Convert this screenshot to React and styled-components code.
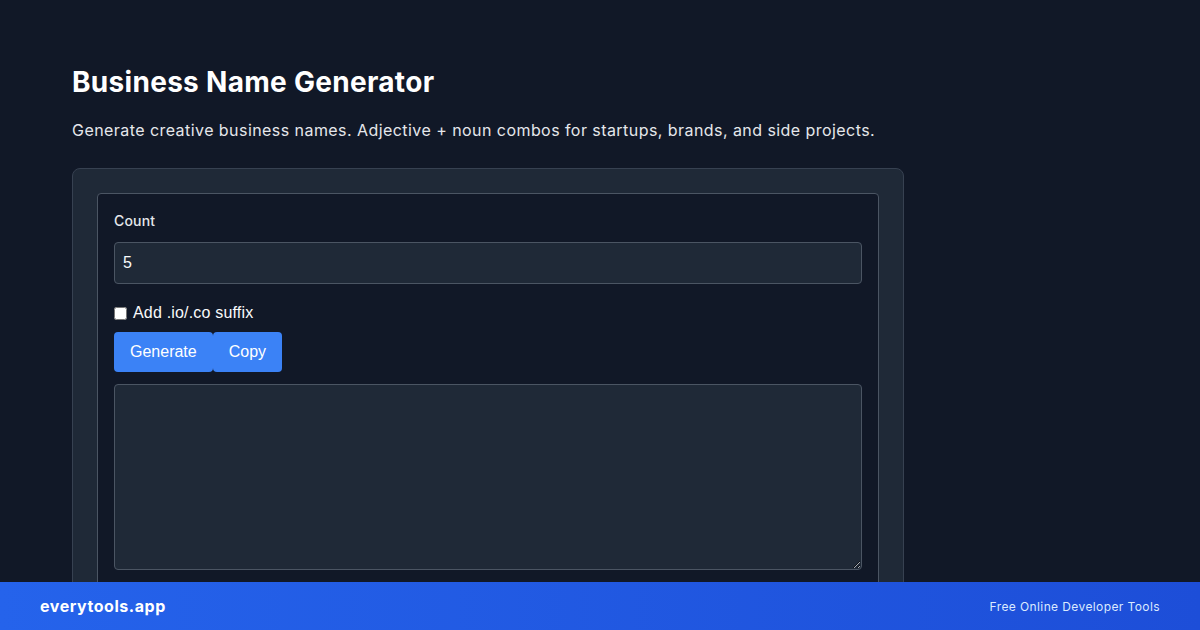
import styled, { createGlobalStyle } from "styled-components";

const GlobalStyle = createGlobalStyle`
  html, body {
    margin: 0;
    padding: 0;
    background: #111827;
    color: #f3f4f6;
    font-family: Inter, "Noto Sans", "Liberation Sans", sans-serif;
  }
  * { box-sizing: border-box; }
`;

const Page = styled.main`
  min-height: 630px;
  padding: 64px 72px 0;
  width: 976px;
`;

const Title = styled.h1`
  font-size: 28px;
  font-weight: 700;
  line-height: 36px;
  margin: 0 0 18px;
  color: #ffffff;
  letter-spacing: 0.3px;
`;

const Lead = styled.p`
  font-size: 16px;
  line-height: 24px;
  margin: 0 0 26px;
  color: #e5e7eb;
  letter-spacing: 0.44px;
`;

const Card = styled.section`
  background: #1f2937;
  border: 1px solid #374151;
  border-radius: 8px;
  padding: 24px;
  width: 832px;
`;

const Panel = styled.div`
  background: #111827;
  border: 1px solid #4b5563;
  border-radius: 4px;
  padding: 17px 16px 40px 16px;
`;

const Label = styled.label`
  display: block;
  font-size: 14px;
  font-weight: 500;
  color: #e5e7eb;
  line-height: 20px;
  margin-bottom: 11px;
  letter-spacing: 0.2px;
`;

const Input = styled.input`
  display: block;
  width: 100%;
  height: 42px;
  background: #1f2937;
  border: 1px solid #4b5563;
  border-radius: 4px;
  color: #f9fafb;
  font-family: "Liberation Sans", Arial, sans-serif;
  font-size: 16px;
  padding: 0 8px;
  outline: none;
`;

const CheckRow = styled.label`
  display: flex;
  align-items: center;
  gap: 6px;
  margin-top: 19px;
  font-family: "Liberation Sans", Arial, sans-serif;
  font-size: 16px;
  line-height: 20px;
  color: #f9fafb;
  letter-spacing: 0.18px;
`;

const Check = styled.input`
  width: 13px;
  height: 13px;
  margin: 0;
`;

const Actions = styled.div`
  display: flex;
  margin-top: 9px;
`;

const Button = styled.button`
  height: 40px;
  padding: 0 16px;
  border: none;
  border-radius: 4px;
  background: #3b82f6;
  color: #ffffff;
  font-family: "Liberation Sans", Arial, sans-serif;
  font-size: 16px;
`;

const Output = styled.textarea`
  display: block;
  width: 100%;
  height: 186px;
  margin-top: 12px;
  background: #1f2937;
  border: 1px solid #4b5563;
  border-radius: 4px;
  color: #f9fafb;
  font: inherit;
  resize: vertical;
`;

const Footer = styled.footer`
  position: fixed;
  left: 0;
  right: 0;
  bottom: 0;
  height: 48px;
  display: flex;
  align-items: center;
  justify-content: space-between;
  padding: 0 40px;
  background: linear-gradient(90deg, #2563eb, #1d4ed8);
`;

const Brand = styled.span`
  font-size: 16px;
  font-weight: 700;
  color: #ffffff;
  letter-spacing: 0.55px;
`;

const Tagline = styled.span`
  font-size: 12px;
  color: #dbeafe;
  letter-spacing: 0.4px;
`;

export default function App() {
  return (
    <>
      <GlobalStyle />
      <Page>
        <Title>Business Name Generator</Title>
        <Lead>
          Generate creative business names. Adjective + noun combos for startups, brands, and side projects.
        </Lead>
        <Card>
          <Panel>
            <Label htmlFor="count">Count</Label>
            <Input id="count" defaultValue="5" />
            <CheckRow>
              <Check type="checkbox" />
              Add .io/.co suffix
            </CheckRow>
            <Actions>
              <Button>Generate</Button>
              <Button>Copy</Button>
            </Actions>
            <Output readOnly />
          </Panel>
        </Card>
      </Page>
      <Footer>
        <Brand>everytools.app</Brand>
        <Tagline>Free Online Developer Tools</Tagline>
      </Footer>
    </>
  );
}
